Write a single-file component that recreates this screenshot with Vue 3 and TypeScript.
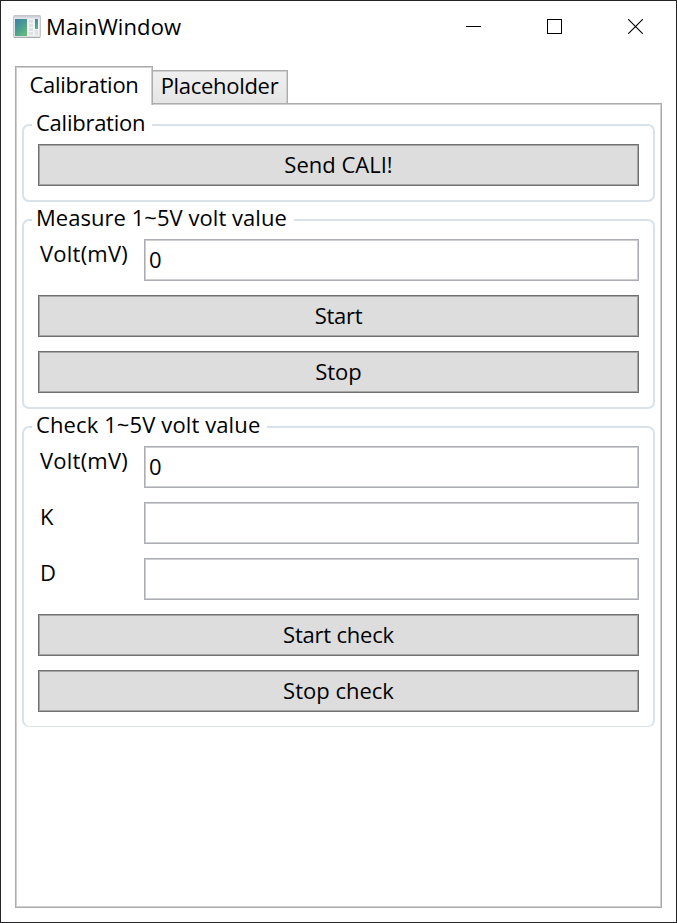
<script setup lang="ts">
import { ref } from 'vue'

interface Field { label: string; value: string }
interface Group { title: string; kind: string; fields: Field[]; buttons: { text: string; kind: string }[] }

const tabs = ['Calibration', 'Placeholder']
const activeTab = ref(0)

const groups = ref<Group[]>([
  { title: 'Calibration', kind: 'calibration', fields: [], buttons: [{ text: 'Send CALI!', kind: 'send' }] },
  {
    title: 'Measure 1~5V volt value',
    kind: 'measure',
    fields: [{ label: 'Volt(mV)', value: '0' }],
    buttons: [{ text: 'Start', kind: 'start' }, { text: 'Stop', kind: 'stop' }],
  },
  {
    title: 'Check 1~5V volt value',
    kind: 'check',
    fields: [{ label: 'Volt(mV)', value: '0' }, { label: 'K', value: '' }, { label: 'D', value: '' }],
    buttons: [{ text: 'Start check', kind: 'start-check' }, { text: 'Stop check', kind: 'stop-check' }],
  },
])
</script>

<template>
  <div class="window">
    <header class="titlebar">
      <svg class="app-icon" width="28" height="24" viewBox="0 0 28 24">
        <defs>
          <linearGradient id="pane" x1="0" y1="0" x2="0.7" y2="1">
            <stop offset="0" stop-color="#3c7fa6" />
            <stop offset="0.5" stop-color="#4a9a94" />
            <stop offset="1" stop-color="#62b87c" />
          </linearGradient>
          <linearGradient id="frame" x1="0" y1="0" x2="0" y2="1">
            <stop offset="0" stop-color="#bfc5cf" />
            <stop offset="0.15" stop-color="#e6e8ec" />
            <stop offset="1" stop-color="#dcdee1" />
          </linearGradient>
        </defs>
        <rect x="0.5" y="0.5" width="27" height="22" rx="1" fill="url(#frame)" stroke="#c3c6cb" />
        <rect x="1" y="22" width="26" height="1" fill="#a9abb0" />
        <rect x="2" y="4" width="12" height="17" fill="url(#pane)" />
        <rect x="14" y="4" width="12" height="17" fill="#f2f3f4" />
        <path d="M16 5h4v3h-4zM16 9h4v3h-4zM16 13h4v3h-4zM16 17h4v3h-4zM22 15h3v5h-3z" fill="#dfe1e4" />
        <rect x="22" y="4" width="3" height="10" fill="url(#pane)" />
      </svg>
      <span class="title">MainWindow</span>
      <div class="controls">
        <svg width="15" height="15" viewBox="0 0 15 15" shape-rendering="crispEdges"><path d="M0 7.5h15" stroke="#000" /></svg>
        <svg width="15" height="15" viewBox="0 0 15 15" shape-rendering="crispEdges"><rect x="0.5" y="0.5" width="14" height="14" fill="none" stroke="#000" /></svg>
        <svg width="15" height="15" viewBox="0 0 15 15"><path d="M0.2 0.2L14.8 14.8M14.8 0.2L0.2 14.8" stroke="#000" stroke-width="1.1" /></svg>
      </div>
    </header>

    <nav class="tabs">
      <div
        v-for="(tab, i) in tabs"
        :key="tab"
        class="tab"
        :class="{ active: i === activeTab }"
        @click="activeTab = i"
      >{{ tab }}</div>
    </nav>

    <main class="panel">
      <section v-for="group in groups" :key="group.title" class="group">
        <h2 class="legend" :class="group.kind">{{ group.title }}</h2>
        <div v-for="field in group.fields" :key="field.label" class="row">
          <span class="label">{{ field.label }}</span>
          <div class="box">{{ field.value }}</div>
        </div>
        <div v-for="button in group.buttons" :key="button.text" class="button" :class="button.kind">{{ button.text }}</div>
      </section>
    </main>
  </div>
</template>

<style>
body { background: #fff; }
</style>

<style scoped>
.window {
  box-sizing: border-box;
  width: 677px;
  height: 923px;
  border: 1px solid #242326;
  background: #fff;
  color: #000;
  display: flex;
  flex-direction: column;
  font-family: "Open Sans", "Noto Sans", sans-serif;
  font-size: 22px;
  line-height: 30px;
  white-space: nowrap;
}
.titlebar {
  height: 51px;
  flex: none;
  display: flex;
  align-items: center;
  padding: 0 33px 0 12px;
}
.app-icon { margin-right: 5px; }
.title { line-height: 28px; padding-bottom: 2px; letter-spacing: 0.1px; }
.controls { margin-left: auto; display: flex; gap: 66px; }
.tabs {
  height: 37px;
  margin: 14px 14px 0;
  flex: none;
  display: flex;
  align-items: flex-end;
}
.tab {
  box-sizing: border-box;
  width: 135px;
  height: 33px;
  border: 1px solid #acacac;
  border-left: 0;
  border-bottom: 0;
  box-shadow: inset -1px 1px #cfcfcf;
  background: linear-gradient(#f0f0f0, #e5e5e5);
  padding-right: 1px;
  text-align: center;
  line-height: 29px;
  letter-spacing: -0.3px;
}
.tab.active {
  position: relative;
  width: 138px;
  height: 39px;
  margin-bottom: -2px;
  padding-right: 0;
  border-left: 1px solid #acacac;
  box-shadow: inset -1px 1px #cfcfcf, inset 1px 0 #cfcfcf;
  background: #fff;
  line-height: 34px;
  letter-spacing: -0.25px;
}
.panel {
  box-sizing: border-box;
  width: 647px;
  height: 805px;
  margin-left: 14px;
  border: 1px solid #acacac;
  box-shadow: inset 0 0 0 1px #cfcfcf;
  padding: 20px 6px;
  display: flex;
  flex-direction: column;
  gap: 17px;
}
.group {
  position: relative;
  box-sizing: border-box;
  border: 2px solid #d9e2e9;
  border-radius: 7px;
  padding: 18px 14px 14px;
  display: flex;
  flex-direction: column;
  gap: 14px;
}
.group:last-child { border-bottom-width: 1px; }
.legend {
  position: absolute;
  left: 8px;
  top: -19px;
  margin: 0;
  padding: 0 7px 0 4px;
  background: #fff;
  font-size: 22px;
  font-weight: 400;
  line-height: 30px;
}
.legend.calibration { letter-spacing: -0.25px; }
.legend.measure { letter-spacing: 0.04px; }
.legend.check { letter-spacing: 0.11px; }
.row { display: flex; height: 42px; }
.label {
  width: 106px;
  padding-left: 2px;
  box-sizing: border-box;
  flex: none;
  line-height: 28px;
  letter-spacing: 0.22px;
}
.box {
  flex: 1;
  box-sizing: border-box;
  border: 1px solid #abadb3;
  box-shadow: inset 0 0 0 1px #cdced1;
  padding-left: 4px;
  line-height: 38px;
}
.button {
  box-sizing: border-box;
  height: 42px;
  border: 1px solid #707070;
  box-shadow: inset 0 0 0 1px #a5a5a5;
  background: #ddd;
  text-align: center;
  line-height: 38px;
}
.button.start { letter-spacing: -0.3px; }
.button.start-check { letter-spacing: -0.2px; }
</style>
